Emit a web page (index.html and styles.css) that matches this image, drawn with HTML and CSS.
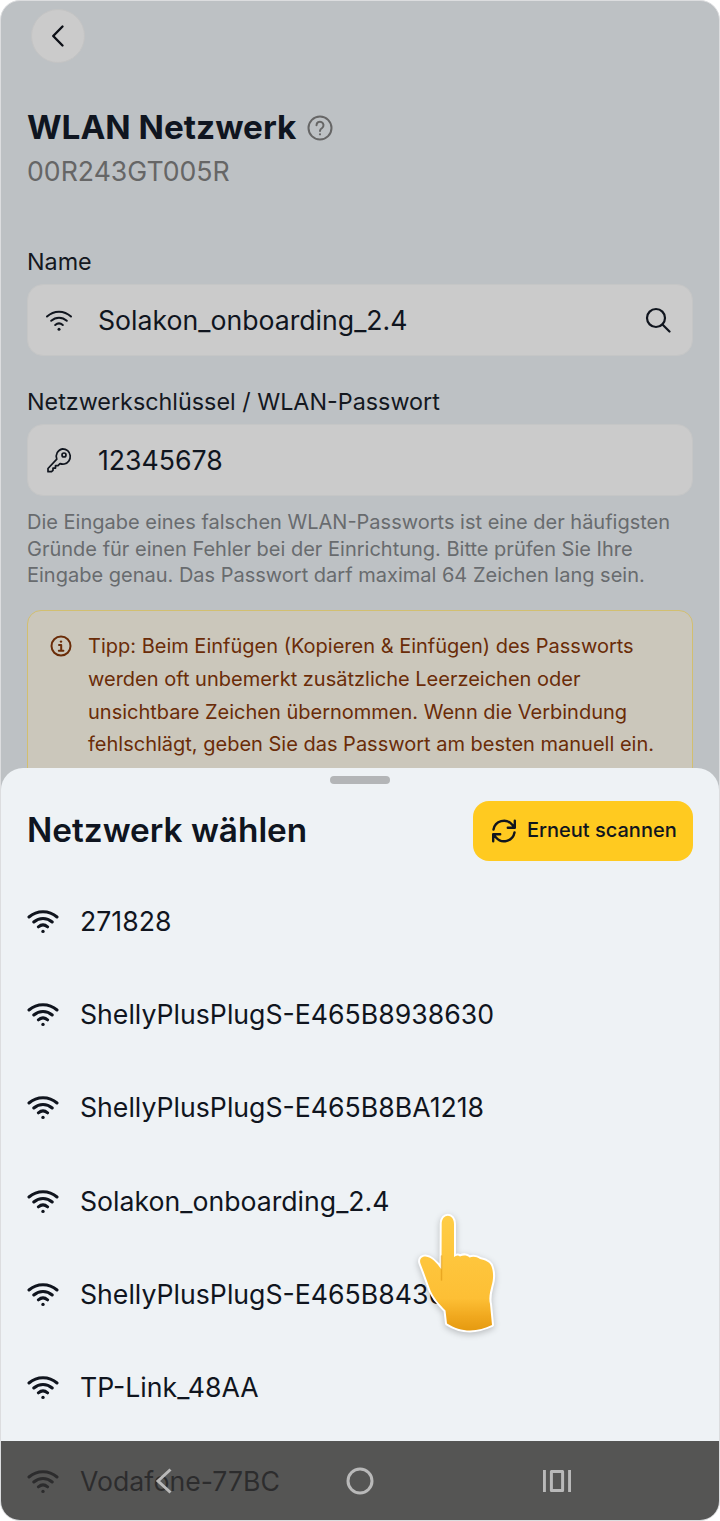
FILE: index.html
```html
<!DOCTYPE html>
<html lang="de">
<head>
<meta charset="utf-8">
<title>WLAN Netzwerk</title>
<link rel="stylesheet" href="styles.css">
</head>
<body>
<div class="frame">
  <main class="page">
    <button class="back" type="button" aria-label="Zurück">
      <svg class="i24" viewBox="0 0 24 24"><path d="M16.500 2.500 7.200 12l9.300 9.500"/></svg>
    </button>
    <div class="title-row">
      <h1>WLAN Netzwerk</h1>
      <svg class="help" viewBox="0 0 26 26"><circle cx="13" cy="13" r="11.500"/><path d="M9.500 10.200a3.500 3.500 0 1 1 5.600 2.800c-1.300.9-2.100 1.500-2.100 3"/><circle class="dot" cx="13" cy="19.300" r="1.100"/></svg>
    </div>
    <p class="serial">00R243GT005R</p>

    <label class="label first">Name</label>
    <div class="input">
      <svg class="wifi small" viewBox="0 0 28 24"><path d="M2 8.500c7-6.500 17-6.500 24 0M6.200 12.800c4.600-4.200 11-4.200 15.600 0M10.200 17c2.300-2 5.300-2 7.600 0"/><circle class="dot" cx="14" cy="21.200" r="1.500"/></svg>
      <span class="value">Solakon_onboarding_2.4</span>
      <svg class="search" viewBox="0 0 26 26"><circle cx="11" cy="11" r="9"/><path d="m17.500 17.500 7 7"/></svg>
    </div>

    <label class="label second">Netzwerkschlüssel / WLAN-Passwort</label>
    <div class="input">
      <svg class="key" viewBox="0 0 26 26"><path d="M16.500 1.800a7.700 7.700 0 0 1 1.800 15.200c-1.500.3-3 .1-4.300-.4l-2 2h-2.500v2.500h-2.500v2.200l-1.500 1.400H2v-3.200l8.800-9.300a7.700 7.700 0 0 1 5.700-10.400z"/><circle cx="18" cy="8" r="2"/></svg>
      <span class="value">12345678</span>
    </div>

    <p class="hint">Die Eingabe eines falschen WLAN-Passworts ist eine der häufigsten Gründe für einen Fehler bei der Einrichtung. Bitte prüfen Sie Ihre Eingabe genau. Das Passwort darf maximal 64 Zeichen lang sein.</p>

    <div class="tip">
      <svg class="info" viewBox="0 0 22 22"><circle cx="11" cy="11" r="9.500"/><path d="M9 10h2.200v5.500M8.800 15.700h4.600"/><circle class="dot" cx="11" cy="6.600" r="1.200"/></svg>
      <p>Tipp: Beim Einfügen (Kopieren &amp; Einfügen) des Passworts werden oft unbemerkt zusätzliche Leerzeichen oder unsichtbare Zeichen übernommen. Wenn die Verbindung fehlschlägt, geben Sie das Passwort am besten manuell ein.</p>
    </div>
  </main>

  <section class="sheet">
    <div class="grip"></div>
    <header class="sheet-head">
      <h2>Netzwerk wählen</h2>
      <button class="scan" type="button">
        <svg class="refresh" viewBox="0 0 26 26"><path d="M2.500 11.500A10.600 10.600 0 0 1 21 6.500l2.500 3M23.500 14.500A10.600 10.600 0 0 1 5 19.500l-2.500-3M23.800 2.800v7h-7M2.200 23.200v-7h7"/></svg>
        <span>Erneut scannen</span>
      </button>
    </header>
    <ul class="list">
      <li><svg class="wifi" viewBox="0 0 32 26"><path d="M2 9c8-7 20-7 28 0M6.800 14c5.400-4.700 13-4.700 18.400 0M11.400 18.800c2.800-2.300 6.400-2.300 9.200 0"/><circle class="dot" cx="16" cy="23.400" r="1.700"/></svg>271828</li>
      <li><svg class="wifi" viewBox="0 0 32 26"><path d="M2 9c8-7 20-7 28 0M6.800 14c5.400-4.700 13-4.700 18.400 0M11.400 18.800c2.800-2.300 6.400-2.300 9.200 0"/><circle class="dot" cx="16" cy="23.400" r="1.700"/></svg>ShellyPlusPlugS-E465B8938630</li>
      <li><svg class="wifi" viewBox="0 0 32 26"><path d="M2 9c8-7 20-7 28 0M6.800 14c5.400-4.700 13-4.700 18.400 0M11.400 18.800c2.800-2.300 6.400-2.300 9.200 0"/><circle class="dot" cx="16" cy="23.400" r="1.700"/></svg>ShellyPlusPlugS-E465B8BA1218</li>
      <li><svg class="wifi" viewBox="0 0 32 26"><path d="M2 9c8-7 20-7 28 0M6.800 14c5.400-4.700 13-4.700 18.400 0M11.400 18.800c2.800-2.300 6.400-2.300 9.200 0"/><circle class="dot" cx="16" cy="23.400" r="1.700"/></svg>Solakon_onboarding_2.4</li>
      <li><svg class="wifi" viewBox="0 0 32 26"><path d="M2 9c8-7 20-7 28 0M6.800 14c5.400-4.700 13-4.700 18.400 0M11.400 18.800c2.800-2.300 6.400-2.300 9.200 0"/><circle class="dot" cx="16" cy="23.400" r="1.700"/></svg>ShellyPlusPlugS-E465B84300</li>
      <li><svg class="wifi" viewBox="0 0 32 26"><path d="M2 9c8-7 20-7 28 0M6.800 14c5.400-4.700 13-4.700 18.400 0M11.400 18.800c2.800-2.300 6.400-2.300 9.200 0"/><circle class="dot" cx="16" cy="23.400" r="1.700"/></svg>TP-Link_48AA</li>
      <li><svg class="wifi" viewBox="0 0 32 26"><path d="M2 9c8-7 20-7 28 0M6.800 14c5.400-4.700 13-4.700 18.400 0M11.400 18.800c2.800-2.300 6.400-2.300 9.200 0"/><circle class="dot" cx="16" cy="23.400" r="1.700"/></svg>Vodafone-77BC</li>
    </ul>
  </section>

  <nav class="nav">
    <svg class="nav-back" viewBox="0 0 20 28"><path d="M15.500 2.500 3 14l12.500 11.500"/></svg>
    <svg class="nav-home" viewBox="0 0 28 28"><circle cx="14" cy="14" r="12"/></svg>
    <svg class="nav-recent" viewBox="0 0 28 24"><path d="M1.400 1v22M26.600 1v22M8.400 2.500h11.200v19H8.400z"/></svg>
  </nav>

  <svg class="hand" viewBox="415 1212 85 122" aria-hidden="true">
    <defs>
      <linearGradient id="skin" x1="0" y1="0" x2="0" y2="1">
        <stop offset="0" stop-color="#ffcd45"/>
        <stop offset=".72" stop-color="#fdbf35"/>
        <stop offset=".88" stop-color="#f0a81e"/>
        <stop offset="1" stop-color="#e59a10"/>
      </linearGradient>
    </defs>
    <path class="hand-skin" d="M441.700 1224c0-11 12.300-11 12.300 0v33c2-1.500 4-2 6-.5 3-1.500 7-1.500 9.500 1 3.500-1.500 7-1 10.500 1.500 5 1 11 3 12 9 1.500 5 1.500 12-.5 18-1.500 6-3 12-1.500 18l2 21c-7 3-14 5.500-22 5.500-8 0-16-2.500-23-7l-1.500-13c-6-6-12-13-15-20-3-8-6-17-10-27-1.500-4 1-7 5-7 6 .5 11 6 16 13z"/>
    <path class="hand-fold" d="M441.500 1256v24"/>
  </svg>
</div>
</body>
</html>
```
FILE: styles.css
```css
* { box-sizing: border-box; }
html, body { margin: 0; padding: 0; background: #fff; }
body { font-family: Inter, "Noto Sans", sans-serif; color: #111827; }
svg { display: block; flex: none; fill: none; stroke: currentColor; stroke-linecap: round; stroke-linejoin: round; }
svg .dot { fill: currentColor; stroke: none; }
h1, h2, p, ul { margin: 0; padding: 0; }

.frame { position: relative; width: 720px; height: 1521px; overflow: hidden; border-radius: 20px; background: #bdc1c4; border: 1px solid #dcdddf; }

.page { padding: 8px 26px 0; height: 100%; }
.back { display: flex; align-items: center; justify-content: center; width: 54px; height: 54px; margin-left: 4px; padding: 0; border-radius: 50%; border: 1px solid #c4c4c4; background: #cbcbcb; color: #0c0f16; }
.i24 { width: 24px; height: 24px; stroke-width: 2.400; }
.title-row { display: flex; align-items: center; gap: 11px; margin-top: 42px; height: 44px; }
h1 { font-size: 33.330px; line-height: 44px; font-weight: 700; color: #0f1520; }
.help { width: 26px; height: 26px; color: #666; stroke-width: 2; margin-top: 1px; }
.serial { font-size: 26.670px; line-height: 32px; color: #666; margin-top: 6px; }

.label { display: block; font-size: 23.330px; line-height: 30px; color: #14181f; }
.label.first { margin-top: 60px; }
.label.second { margin-top: 31px; }
.input { display: flex; align-items: center; height: 72px; margin-top: 7px; padding: 0 21px 0 17px; border-radius: 16px; background: #cbcbcb; border: 1px solid #c5c6c6; }
.value { flex: 1; margin-left: 25px; font-size: 26.670px; color: #10151e; }
.wifi.small { width: 28px; height: 24px; stroke-width: 2; color: #10151e; }
.search { width: 26px; height: 26px; stroke-width: 2.200; color: #10151e; }
.key { width: 26px; height: 26px; stroke-width: 1.700; color: #10151e; margin: 0 1px; }
.hint { margin-top: 13px; font-size: 20px; line-height: 26.670px; color: #686b6e; }

.tip { display: flex; gap: 16px; margin-top: 21px; padding: 19px 22px 0; height: 220px; border: 1px solid #d2bf70; border-radius: 14px; background: #cbc7bb; color: #6a2c08; }
.tip p { font-size: 20px; line-height: 32.800px; }
.info { width: 22px; height: 22px; margin-top: 5px; stroke-width: 2; }

.sheet { position: absolute; left: 0; right: 0; top: 767px; bottom: 0; border-radius: 22px 22px 0 0; background: #eef2f5; padding: 0 26px; }
.grip { width: 60px; height: 8px; margin: 8px auto 0; border-radius: 4px; background: #b3b5b7; }
.sheet-head { display: flex; align-items: center; justify-content: space-between; margin-top: 17px; height: 60px; }
h2 { font-size: 33.330px; font-weight: 600; color: #0f1520; margin-top: -2px; }
.scan { display: flex; align-items: center; gap: 10px; height: 60px; width: 220px; padding: 0 18px; border: 0; border-radius: 16px; background: #ffca20; color: #10151e; font: 500 20px Inter, sans-serif; white-space: nowrap; }
.scan span { margin-top: -2px; }
.refresh { width: 26px; height: 26px; stroke-width: 2.400; }
.list { list-style: none; margin-top: 13px; }
.list li { display: flex; align-items: center; gap: 21px; height: 93.330px; font-size: 26.670px; color: #10151e; }
.wifi { width: 32px; height: 26px; stroke-width: 3; color: #10151e; }

.nav { position: absolute; left: 0; right: 0; bottom: 0; height: 79px; background: rgba(51,50,49,.82); color: #b9b9b9; display: grid; grid-template-columns: 1fr 1fr 1fr; align-items: center; justify-items: center; }
.nav-back { width: 20px; height: 28px; stroke-width: 3; stroke-linecap: butt; stroke-linejoin: miter; margin-left: 88px; }
.nav-home { width: 28px; height: 28px; stroke-width: 3; }
.nav-recent { width: 28px; height: 24px; stroke-width: 3; stroke-linecap: butt; margin-right: 85px; }

.hand { position: absolute; left: 414px; top: 1211px; width: 85px; height: 122px; overflow: visible; filter: drop-shadow(0 2px 3px rgba(0,0,0,.22)); }
.hand-skin { fill: url(#skin); stroke: #fff; stroke-width: 4; paint-order: stroke; }
.hand-fold { stroke: #d9920f; stroke-width: 1.500; opacity: .55; }
```
